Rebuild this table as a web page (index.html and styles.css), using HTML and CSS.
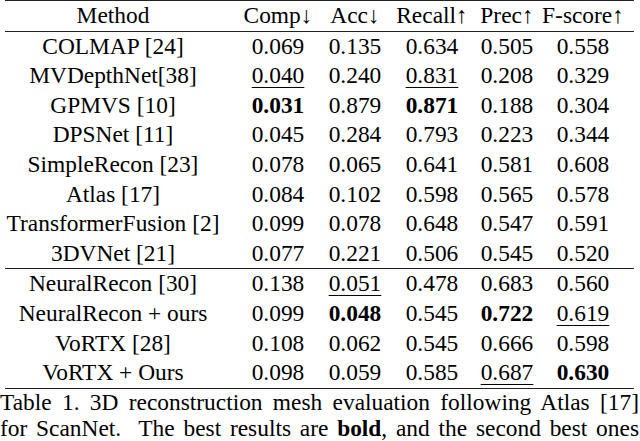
FILE: index.html
```html
<!DOCTYPE html>
<html>
<head>
<meta charset="utf-8">
<link rel="stylesheet" href="styles.css">
</head>
<body>
<div class="page">
  <div class="table">
    <div class="row head">
      <div class="c m">Method</div>
      <div class="c comp">Comp↓</div>
      <div class="c">Acc↓</div>
      <div class="c">Recall↑</div>
      <div class="c">Prec↑</div>
      <div class="c">F-score↑</div>
    </div>
    <div class="group">
      <div class="row"><div class="c m">COLMAP [24]</div><div class="c comp">0.069</div><div class="c">0.135</div><div class="c">0.634</div><div class="c">0.505</div><div class="c">0.558</div></div>
      <div class="row"><div class="c m">MVDepthNet[38]</div><div class="c comp"><u>0.040</u></div><div class="c">0.240</div><div class="c"><u>0.831</u></div><div class="c">0.208</div><div class="c">0.329</div></div>
      <div class="row"><div class="c m">GPMVS [10]</div><div class="c comp"><b>0.031</b></div><div class="c">0.879</div><div class="c"><b>0.871</b></div><div class="c">0.188</div><div class="c">0.304</div></div>
      <div class="row"><div class="c m">DPSNet [11]</div><div class="c comp">0.045</div><div class="c">0.284</div><div class="c">0.793</div><div class="c">0.223</div><div class="c">0.344</div></div>
      <div class="row"><div class="c m">SimpleRecon [23]</div><div class="c comp">0.078</div><div class="c">0.065</div><div class="c">0.641</div><div class="c">0.581</div><div class="c">0.608</div></div>
      <div class="row"><div class="c m">Atlas [17]</div><div class="c comp">0.084</div><div class="c">0.102</div><div class="c">0.598</div><div class="c">0.565</div><div class="c">0.578</div></div>
      <div class="row"><div class="c m">TransformerFusion [2]</div><div class="c comp">0.099</div><div class="c">0.078</div><div class="c">0.648</div><div class="c">0.547</div><div class="c">0.591</div></div>
      <div class="row"><div class="c m">3DVNet [21]</div><div class="c comp">0.077</div><div class="c">0.221</div><div class="c">0.506</div><div class="c">0.545</div><div class="c">0.520</div></div>
    </div>
    <div class="group second">
      <div class="row"><div class="c m">NeuralRecon [30]</div><div class="c comp">0.138</div><div class="c"><u>0.051</u></div><div class="c">0.478</div><div class="c">0.683</div><div class="c">0.560</div></div>
      <div class="row"><div class="c m">NeuralRecon + ours</div><div class="c comp">0.099</div><div class="c"><b>0.048</b></div><div class="c">0.545</div><div class="c"><b>0.722</b></div><div class="c"><u>0.619</u></div></div>
      <div class="row"><div class="c m">VoRTX [28]</div><div class="c comp">0.108</div><div class="c">0.062</div><div class="c">0.545</div><div class="c">0.666</div><div class="c">0.598</div></div>
      <div class="row"><div class="c m">VoRTX + Ours</div><div class="c comp">0.098</div><div class="c">0.059</div><div class="c">0.585</div><div class="c"><u>0.687</u></div><div class="c"><b>0.630</b></div></div>
    </div>
  </div>
  <div class="caption">
    <div class="line">Table 1. 3D reconstruction mesh evaluation following Atlas [17]</div>
    <div class="line">for ScanNet.&nbsp; The best results are <b>bold</b>, and the second best ones</div>
  </div>
</div>
</body>
</html>
```

FILE: styles.css
```css
html,
body {
  margin: 0;
  padding: 0;
  background: #ffffff;
}

body {
  width: 640px;
  height: 441px;
  overflow: hidden;
  font-family: "Liberation Serif", "Times New Roman", serif;
  font-size: 23.4px;
  color: #000;
}

.page {
  display: flex;
  flex-direction: column;
}

.table {
  margin-left: 5px;
  width: 629px;
  border-top: 1.5px solid #222;
  border-bottom: 1px solid #222;
}

.row {
  display: grid;
  grid-template-columns: 216px 95px 78px 76px 74px 78px;
  height: 29.6px;
  align-items: center;
}

.row.head {
  height: 29.5px;
  border-bottom: 1px solid #222;
}

.group.second {
  border-top: 1.5px solid #222;
}

.c {
  display: flex;
  justify-content: center;
  white-space: nowrap;
  line-height: 1;
}

.c.comp {
  padding-left: 19px;
}

u {
  text-decoration: underline;
  text-decoration-thickness: 1px;
  text-underline-offset: 4px;
}

.caption {
  width: 639px;
  line-height: 26px;
}

.caption .line {
  text-align: justify;
  text-align-last: justify;
  white-space: nowrap;
}
```
